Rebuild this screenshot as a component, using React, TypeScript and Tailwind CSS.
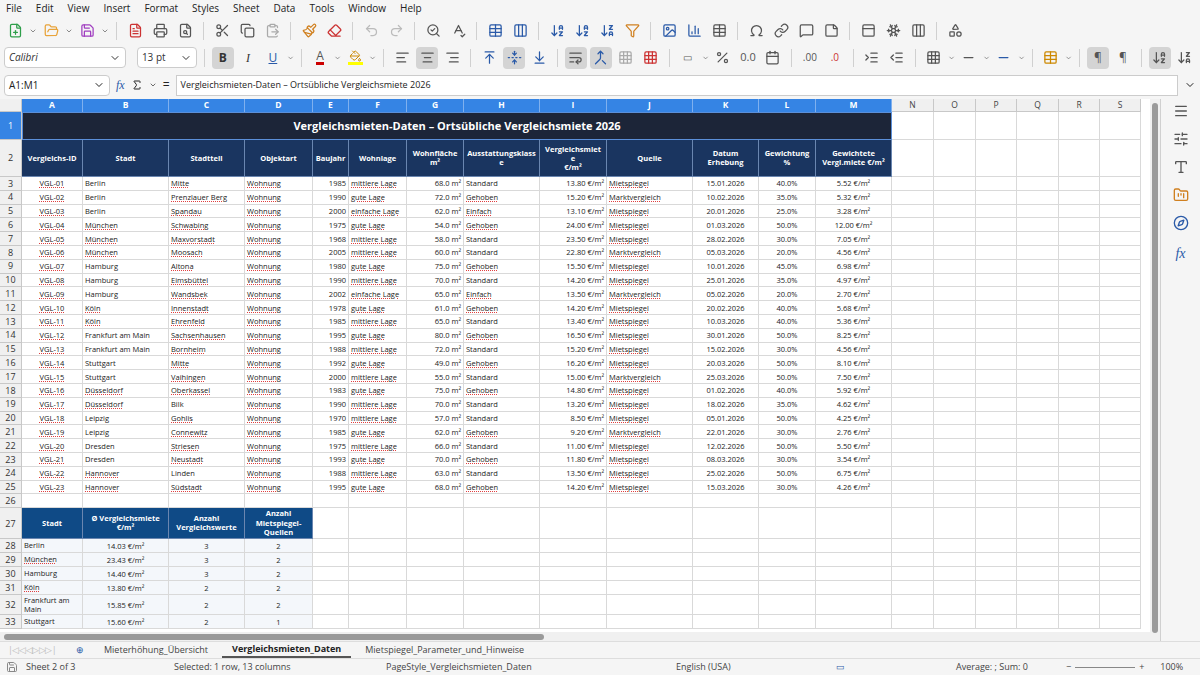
import {
  FilePlus, FolderOpen, Save, FileText, Printer, FileSearch, Scissors, Copy, ClipboardPaste, Paintbrush, Eraser,
  Undo2, Redo2, SearchCheck, SpellCheck, Table, Columns3, ArrowDownAZ, ArrowDownZA, Filter, Image, BarChart3,
  Sigma, Omega, Link, MessageSquare, StickyNote, PanelTop, Snowflake, Shapes, AlignLeft, AlignCenter, AlignRight,
  ArrowUpToLine, FoldVertical, ArrowDownToLine, WrapText, Merge, Percent, Calendar, IndentIncrease, IndentDecrease,
  Grid3x3, Minus, PaintBucket, SlidersHorizontal, Type, FolderKanban, Compass, ChevronDown, Menu,
} from "lucide-react";

const COLS = [
  ["A", 61], ["B", 86], ["C", 76], ["D", 68], ["E", 36], ["F", 58], ["G", 57], ["H", 76], ["I", 67], ["J", 86], ["K", 66], ["L", 57], ["M", 76],
] as const;
const EXTRA = [["N", 42], ["O", 42], ["P", 41], ["Q", 42], ["R", 41], ["S", 41]] as const;

const rows: string[][] = [
  ["VGL-01", "Berlin", "Mitte", "1985", "mittlere Lage", "68.0", "Standard", "13.80", "Mietspiegel", "15.01.2026", "40.0%", "5.52"],
  ["VGL-02", "Berlin", "Prenzlauer Berg", "1990", "gute Lage", "72.0", "Gehoben", "15.20", "Marktvergleich", "10.02.2026", "35.0%", "5.32"],
  ["VGL-03", "Berlin", "Spandau", "2000", "einfache Lage", "62.0", "Einfach", "13.10", "Mietspiegel", "20.01.2026", "25.0%", "3.28"],
  ["VGL-04", "München", "Schwabing", "1975", "gute Lage", "54.0", "Gehoben", "24.00", "Mietspiegel", "01.03.2026", "50.0%", "12.00"],
  ["VGL-05", "München", "Maxvorstadt", "1968", "mittlere Lage", "58.0", "Standard", "23.50", "Mietspiegel", "28.02.2026", "30.0%", "7.05"],
  ["VGL-06", "München", "Moosach", "2005", "mittlere Lage", "60.0", "Standard", "22.80", "Marktvergleich", "05.03.2026", "20.0%", "4.56"],
  ["VGL-07", "Hamburg", "Altona", "1980", "gute Lage", "75.0", "Gehoben", "15.50", "Mietspiegel", "10.01.2026", "45.0%", "6.98"],
  ["VGL-08", "Hamburg", "Eimsbüttel", "1990", "mittlere Lage", "70.0", "Standard", "14.20", "Mietspiegel", "25.01.2026", "35.0%", "4.97"],
  ["VGL-09", "Hamburg", "Wandsbek", "2002", "einfache Lage", "65.0", "Einfach", "13.50", "Marktvergleich", "05.02.2026", "20.0%", "2.70"],
  ["VGL-10", "Köln", "Innenstadt", "1978", "gute Lage", "61.0", "Gehoben", "14.20", "Mietspiegel", "20.02.2026", "40.0%", "5.68"],
  ["VGL-11", "Köln", "Ehrenfeld", "1985", "mittlere Lage", "65.0", "Standard", "13.40", "Mietspiegel", "10.03.2026", "40.0%", "5.36"],
  ["VGL-12", "Frankfurt am Main", "Sachsenhausen", "1995", "gute Lage", "80.0", "Gehoben", "16.50", "Mietspiegel", "30.01.2026", "50.0%", "8.25"],
  ["VGL-13", "Frankfurt am Main", "Bornheim", "1988", "mittlere Lage", "72.0", "Standard", "15.20", "Mietspiegel", "15.02.2026", "30.0%", "4.56"],
  ["VGL-14", "Stuttgart", "Mitte", "1992", "gute Lage", "49.0", "Gehoben", "16.20", "Mietspiegel", "20.03.2026", "50.0%", "8.10"],
  ["VGL-15", "Stuttgart", "Vaihingen", "2000", "mittlere Lage", "55.0", "Standard", "15.00", "Marktvergleich", "25.03.2026", "50.0%", "7.50"],
  ["VGL-16", "Düsseldorf", "Oberkassel", "1983", "gute Lage", "75.0", "Gehoben", "14.80", "Mietspiegel", "01.02.2026", "40.0%", "5.92"],
  ["VGL-17", "Düsseldorf", "Bilk", "1990", "mittlere Lage", "70.0", "Standard", "13.20", "Mietspiegel", "18.02.2026", "35.0%", "4.62"],
  ["VGL-18", "Leipzig", "Gohlis", "1970", "mittlere Lage", "57.0", "Standard", "8.50", "Mietspiegel", "05.01.2026", "50.0%", "4.25"],
  ["VGL-19", "Leipzig", "Connewitz", "1985", "gute Lage", "62.0", "Gehoben", "9.20", "Marktvergleich", "22.01.2026", "30.0%", "2.76"],
  ["VGL-20", "Dresden", "Striesen", "1975", "mittlere Lage", "66.0", "Standard", "11.00", "Mietspiegel", "12.02.2026", "50.0%", "5.50"],
  ["VGL-21", "Dresden", "Neustadt", "1993", "gute Lage", "70.0", "Gehoben", "11.80", "Mietspiegel", "08.03.2026", "30.0%", "3.54"],
  ["VGL-22", "Hannover", "Linden", "1988", "mittlere Lage", "63.0", "Standard", "13.50", "Mietspiegel", "25.02.2026", "50.0%", "6.75"],
  ["VGL-23", "Hannover", "Südstadt", "1995", "gute Lage", "68.0", "Gehoben", "14.20", "Mietspiegel", "15.03.2026", "30.0%", "4.26"],
];

const summary = [
  ["Berlin", "14.03", "3", "2", 14],
  ["München", "23.43", "3", "2", 14],
  ["Hamburg", "14.40", "3", "2", 14],
  ["Köln", "13.80", "2", "2", 14],
  ["Frankfurt am Main", "15.85", "2", "2", 20],
  ["Stuttgart", "15.60", "2", "1", 14],
] as const;

const heads = ["Vergleichs-ID", "Stadt", "Stadtteil", "Objektart", "Baujahr", "Wohnlage", "Wohnfläche\nm²", "Ausstattungsklass\ne", "Vergleichsmiet\ne\n€/m²", "Quelle", "Datum\nErhebung", "Gewichtung\n%", "Gewichtete\nVergl.miete €/m²"];

const font = { fontFamily: '"Open Sans", "Liberation Sans", sans-serif' };

function RowHead({ n, h, sel }: { n: number | string; h: number; sel?: boolean }) {
  return (
    <div
      className={`w-[22px] shrink-0 flex items-center justify-center text-[9px] border-b border-r border-[#c8c8c8] ${sel ? "bg-[#3584e4] text-white" : "bg-[#f0f0f0] text-[#333]"}`}
      style={{ height: h }}
    >
      {n}
    </div>
  );
}

function Empties({ h }: { h: number }) {
  return (
    <>
      {EXTRA.map(([c, w]) => (
        <div key={c} className="shrink-0 border-b border-r border-[#d9d9d9] bg-white" style={{ width: w, height: h }} />
      ))}
    </>
  );
}

function Cell({ w, h, children, cls = "", wrap }: { w: number; h: number; children?: React.ReactNode; cls?: string; wrap?: boolean }) {
  return (
    <div className={`shrink-0 border-b border-r border-[#d9d9d9] px-[2px] flex items-center overflow-hidden text-[7.5px] text-[#222] ${wrap ? "whitespace-normal leading-[9px]" : "whitespace-nowrap leading-[10px]"} ${cls}`} style={{ width: w, height: h }}>
      {children}
    </div>
  );
}

const U = ({ t }: { t: string }) => <span className="underline decoration-dotted decoration-[#e04040] decoration-1 underline-offset-1">{t}</span>;

const Tb = ({ children, active }: { children: React.ReactNode; active?: boolean }) => (
  <div className={`h-[22px] min-w-[22px] flex items-center justify-center rounded-sm ${active ? "bg-[#d4d4d4]" : ""}`}>{children}</div>
);
const Sep = () => <div className="w-px h-[18px] bg-[#d0d0d0] mx-1" />;

export default function App() {
  const ic = "w-[15px] h-[15px]";
  return (
    <div className="w-[1200px] h-[675px] bg-[#f5f5f5] flex flex-col overflow-hidden text-[#222]" style={font}>
      {/* Menu */}
      <div className="h-[17px] flex items-center gap-[14px] px-[6px] text-[10px]">
        {["File", "Edit", "View", "Insert", "Format", "Styles", "Sheet", "Data", "Tools", "Window", "Help"].map((m) => <span key={m}>{m}</span>)}
      </div>
      {/* Toolbar 1 */}
      <div className="h-[27px] flex items-center gap-[3px] px-[4px] text-[#555]">
        <Tb><FilePlus className={`${ic} text-[#2e9e4a]`} /></Tb><ChevronDown className="w-2 h-2" />
        <Tb><FolderOpen className={`${ic} text-[#e8a33a]`} /></Tb><ChevronDown className="w-2 h-2" />
        <Tb><Save className={`${ic} text-[#a03ec0]`} /></Tb><ChevronDown className="w-2 h-2" /><Sep />
        <Tb><FileText className={`${ic} text-[#c33]`} /></Tb><Tb><Printer className={ic} /></Tb><Tb><FileSearch className={ic} /></Tb><Sep />
        <Tb><Scissors className={ic} /></Tb><Tb><Copy className={ic} /></Tb><Tb><ClipboardPaste className={`${ic} text-[#aaa]`} /></Tb><Sep />
        <Tb><Paintbrush className={`${ic} text-[#d08020]`} /></Tb><Tb><Eraser className={`${ic} text-[#c33]`} /></Tb><Sep />
        <Tb><Undo2 className={`${ic} text-[#bbb]`} /></Tb><Tb><Redo2 className={`${ic} text-[#bbb]`} /></Tb><Sep />
        <Tb><SearchCheck className={ic} /></Tb><Tb><SpellCheck className={ic} /></Tb><Sep />
        <Tb><Table className={`${ic} text-[#2a5aa8]`} /></Tb><Tb><Columns3 className={`${ic} text-[#2a5aa8]`} /></Tb><Sep />
        <Tb><ArrowDownAZ className={`${ic} text-[#2a5aa8]`} /></Tb><Tb><ArrowDownAZ className={`${ic} text-[#2a5aa8]`} /></Tb><Tb><ArrowDownZA className={`${ic} text-[#2a5aa8]`} /></Tb><Tb><Filter className={`${ic} text-[#d08020]`} /></Tb><Sep />
        <Tb><Image className={`${ic} text-[#2a5aa8]`} /></Tb><Tb><BarChart3 className={`${ic} text-[#2a5aa8]`} /></Tb><Tb><Table className={ic} /></Tb><Sep />
        <Tb><Omega className={ic} /></Tb><Tb><Link className={ic} /></Tb><Tb><MessageSquare className={ic} /></Tb><Tb><StickyNote className={ic} /></Tb><Sep />
        <Tb><PanelTop className={ic} /></Tb><Tb><Snowflake className={ic} /></Tb><Tb><Columns3 className={ic} /></Tb><Sep /><Tb><Shapes className={ic} /></Tb>
      </div>
      {/* Toolbar 2 */}
      <div className="h-[27px] flex items-center gap-[3px] px-[4px] text-[#555]">
        <div className="w-[135px] h-[21px] bg-white border border-[#ccc] rounded-sm flex items-center justify-between px-1 text-[10px] italic text-[#333]">Calibri<ChevronDown className="w-3 h-3 not-italic" /></div>
        <div className="w-[66px] h-[21px] ml-2 bg-white border border-[#ccc] rounded-sm flex items-center justify-between px-1 text-[10px] text-[#333]">13 pt<ChevronDown className="w-3 h-3" /></div>
        <Sep />
        <Tb active><span className="font-bold text-[12px] text-[#333]">B</span></Tb>
        <Tb><span className="italic text-[12px] text-[#333]" style={{ fontFamily: "Liberation Serif, serif" }}>I</span></Tb>
        <Tb><span className="underline text-[12px] text-[#2a5aa8]">U</span></Tb><ChevronDown className="w-2 h-2" /><Sep />
        <Tb><span className="text-[12px] border-b-[3px] border-[#c00] leading-none">A</span></Tb><ChevronDown className="w-2 h-2" />
        <Tb><PaintBucket className={`${ic} text-[#c80] border-b-[3px] border-[#ff0]`} /></Tb><ChevronDown className="w-2 h-2" /><Sep />
        <Tb><AlignLeft className={ic} /></Tb><Tb active><AlignCenter className={ic} /></Tb><Tb><AlignRight className={ic} /></Tb><Sep />
        <Tb><ArrowUpToLine className={`${ic} text-[#2a5aa8]`} /></Tb><Tb active><FoldVertical className={`${ic} text-[#2a5aa8]`} /></Tb><Tb><ArrowDownToLine className={`${ic} text-[#2a5aa8]`} /></Tb><Sep />
        <Tb active><WrapText className={ic} /></Tb><Tb active><Merge className={`${ic} text-[#2a5aa8]`} /></Tb><Tb><Grid3x3 className={`${ic} text-[#aaa]`} /></Tb><Tb><Grid3x3 className={`${ic} text-[#c33]`} /></Tb><Sep />
        <Tb><span className="text-[10px]">▭</span></Tb><ChevronDown className="w-2 h-2" /><Tb><Percent className={ic} /></Tb><Tb><span className="text-[11px]">0.0</span></Tb><Tb><Calendar className={ic} /></Tb><Sep />
        <Tb><span className="text-[10px]">.00</span></Tb><Tb><span className="text-[10px] text-[#c33]">.0</span></Tb><Sep />
        <Tb><IndentIncrease className={ic} /></Tb><Tb><IndentDecrease className={ic} /></Tb><Sep />
        <Tb><Grid3x3 className={ic} /></Tb><ChevronDown className="w-2 h-2" /><Tb><Minus className={ic} /></Tb><ChevronDown className="w-2 h-2" /><Tb><Minus className={`${ic} text-[#2a5aa8]`} /></Tb><ChevronDown className="w-2 h-2" /><Sep />
        <Tb><Table className={`${ic} text-[#c80]`} /></Tb><ChevronDown className="w-2 h-2" /><Sep />
        <Tb active><span className="text-[12px]">¶</span></Tb><Tb><span className="text-[12px]">¶</span></Tb><Sep />
        <Tb active><ArrowDownAZ className={ic} /></Tb><Tb><ArrowDownZA className={ic} /></Tb>
      </div>
      {/* Formula bar */}
      <div className="h-[28px] flex items-center px-[4px] gap-[6px]">
        <div className="w-[106px] h-[21px] bg-white border border-[#ccc] rounded-sm flex items-center justify-between px-1 text-[10px]">A1:M1<ChevronDown className="w-3 h-3" /></div>
        <span className="italic text-[#2a5aa8] text-[12px]" style={{ fontFamily: "Liberation Serif, serif" }}>fx</span>
        <Sigma className="w-3 h-3" /><ChevronDown className="w-2 h-2" /><span className="text-[12px]">=</span>
        <div className="flex-1 h-[21px] bg-white border border-[#ccc] flex items-center px-1 text-[9px]">Vergleichsmieten-Daten – Ortsübliche Vergleichsmiete 2026</div>
        <ChevronDown className="w-3 h-3" />
      </div>

      <div className="flex flex-1 min-h-0">
        <div className="w-[1150px] flex flex-col min-h-0">
          <div className="flex-1 bg-white overflow-hidden min-h-0">
            {/* column header */}
            <div className="flex h-[13px] text-[8.5px] font-bold">
              <div className="w-[22px] shrink-0 bg-[#f0f0f0] border-r border-b border-[#c8c8c8]" />
              {COLS.map(([c, w]) => <div key={c} className="shrink-0 bg-[#3584e4] text-white flex items-center justify-center border-r border-[#7fb0ee]" style={{ width: w }}>{c}</div>)}
              {EXTRA.map(([c, w]) => <div key={c} className="shrink-0 bg-[#f0f0f0] text-[#444] font-normal flex items-center justify-center border-r border-b border-[#c8c8c8]" style={{ width: w }}>{c}</div>)}
            </div>
            {/* row 1 */}
            <div className="flex">
              <RowHead n={1} h={28} sel />
              <div className="w-[870px] h-[28px] shrink-0 bg-[#1c2538] text-white font-bold text-[11px] flex items-center justify-center border border-[#5b8fd8]">Vergleichsmieten-Daten – Ortsübliche Vergleichsmiete 2026</div>
              <Empties h={28} />
            </div>
            {/* row 2 */}
            <div className="flex">
              <RowHead n={2} h={37} />
              {COLS.map(([c, w], i) => (
                <div key={c} className="shrink-0 h-[37px] bg-[#1a3560] text-white font-bold text-[7.5px] leading-[9px] text-center flex items-center justify-center border-r border-b border-[#6a86b0] px-[1px] whitespace-pre-line" style={{ width: w }}>{heads[i]}</div>
              ))}
              <Empties h={37} />
            </div>
            {rows.map((r, i) => (
              <div key={i} className="flex">
                <RowHead n={i + 3} h={13.8} />
                <Cell w={61} h={13.8} cls="justify-center"><U t={r[0]} /></Cell>
                <Cell w={86} h={13.8}>{r[1] === "Köln" || r[1] === "München" || r[1] === "Düsseldorf" || r[1] === "Hannover" ? <U t={r[1]} /> : r[1]}</Cell>
                <Cell w={76} h={13.8}>{r[2] === "Bilk" || r[2] === "Linden" ? r[2] : <U t={r[2]} />}</Cell>
                <Cell w={68} h={13.8}><U t="Wohnung" /></Cell>
                <Cell w={36} h={13.8} cls="justify-end">{r[3]}</Cell>
                <Cell w={58} h={13.8}><U t={r[4]} /></Cell>
                <Cell w={57} h={13.8} cls="justify-end">{r[5]} m²</Cell>
                <Cell w={76} h={13.8}>{r[6] === "Standard" ? r[6] : <U t={r[6]} />}</Cell>
                <Cell w={67} h={13.8} cls="justify-end">{r[7]} €/m²</Cell>
                <Cell w={86} h={13.8}><U t={r[8]} /></Cell>
                <Cell w={66} h={13.8} cls="justify-center">{r[9]}</Cell>
                <Cell w={57} h={13.8} cls="justify-center">{r[10]}</Cell>
                <Cell w={76} h={13.8} cls="justify-center">{r[11]} €/m²</Cell>
                <Empties h={13.8} />
              </div>
            ))}
            <div className="flex">
              <RowHead n={26} h={14} />
              {COLS.map(([c, w]) => <Cell key={c} w={w} h={14} />)}
              <Empties h={14} />
            </div>
            <div className="flex">
              <RowHead n={27} h={31} />
              {[["Stadt", 61], ["Ø Vergleichsmiete\n€/m²", 86], ["Anzahl\nVergleichswerte", 76], ["Anzahl\nMietspiegel-\nQuellen", 68]].map(([t, w]) => (
                <div key={t} className="shrink-0 h-[31px] bg-[#0f4a86] text-white font-bold text-[7.5px] leading-[9.5px] text-center flex items-center justify-center border-r border-b border-[#6a86b0] px-[2px] whitespace-pre-line" style={{ width: w as number }}>{t}</div>
              ))}
              {COLS.slice(4).map(([c, w]) => <Cell key={c} w={w} h={31} />)}
              <Empties h={31} />
            </div>
            {summary.map(([s, v, a, q, h], i) => (
              <div key={s} className="flex">
                <RowHead n={28 + i} h={h} />
                <Cell w={61} h={h} wrap cls="bg-[#f4f7fb]">{s === "München" || s === "Köln" ? <U t={s} /> : s}</Cell>
                <Cell w={86} h={h} cls="justify-center bg-[#f4f7fb]">{v} €/m²</Cell>
                <Cell w={76} h={h} cls="justify-center bg-[#f4f7fb]">{a}</Cell>
                <Cell w={68} h={h} cls="justify-center bg-[#f4f7fb]">{q}</Cell>
                {COLS.slice(4).map(([c, w]) => <Cell key={c} w={w} h={h} />)}
                <Empties h={h} />
              </div>
            ))}
          </div>
          <div className="h-[9px] bg-[#f0f0f0] flex items-center"><div className="w-[540px] h-[6px] ml-[4px] rounded bg-[#9a9a9a]" /></div>
        </div>
        <div className="w-[10px] bg-[#f0f0f0] flex justify-center pt-1"><div className="w-[6px] h-[530px] rounded bg-[#9a9a9a]" /></div>
        <div className="w-[40px] border-l border-[#d0d0d0] flex flex-col items-center gap-[12px] pt-[4px] text-[#555]">
          <Menu className="w-4 h-4" />
          <SlidersHorizontal className="w-4 h-4" />
          <Type className="w-4 h-4" />
          <FolderKanban className="w-4 h-4 text-[#d08020]" />
          <Compass className="w-4 h-4 text-[#2a5aa8]" />
          <span className="italic text-[#2a5aa8] text-[14px]" style={{ fontFamily: "Liberation Serif, serif" }}>fx</span>
        </div>
      </div>

      {/* tabs */}
      <div className="h-[17px] flex items-center text-[9px] text-[#444] border-t border-[#ddd]">
        <span className="w-[70px] text-[#bbb] pl-2 tracking-tighter">|◁◁◁▷▷▷|</span>
        <span className="w-[20px] text-[#2a5aa8] text-center">⊕</span>
        <span className="px-[14px]">Mieterhöhung_Übersicht</span>
        <span className="px-[10px] font-bold text-[#222] border-b-2 border-[#555] h-full flex items-center">Vergleichsmieten_Daten</span>
        <span className="px-[14px]">Mietspiegel_Parameter_und_Hinweise</span>
      </div>
      {/* status */}
      <div className="h-[17px] flex items-center text-[9px] text-[#444] border-t border-[#ddd]">
        <Save className="w-3 h-3 ml-[6px] text-[#888]" />
        <span className="ml-[8px] w-[148px]">Sheet 2 of 3</span>
        <span className="w-[212px]">Selected: 1 row, 13 columns</span>
        <span className="w-[290px]">PageStyle_Vergleichsmieten_Daten</span>
        <span className="w-[160px]">English (USA)</span>
        <span className="w-[120px] text-[#2a5aa8]">▭</span>
        <span className="w-[110px]">Average: ; Sum: 0</span>
        <span className="flex items-center gap-1">− <span className="w-[60px] h-px bg-[#888]" /> + <span className="ml-3">100%</span></span>
      </div>
    </div>
  );
}
